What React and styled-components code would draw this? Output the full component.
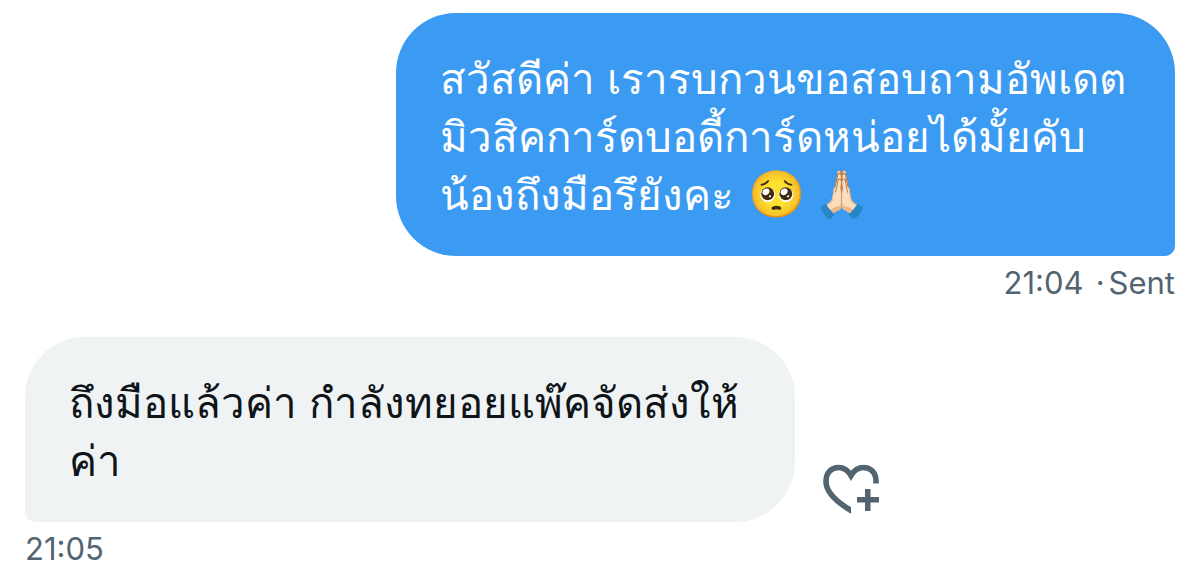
import React from "react";
import styled, { createGlobalStyle } from "styled-components";

const GlobalStyle = createGlobalStyle`
  *, *::before, *::after { box-sizing: border-box; }
  body {
    margin: 0;
    background: #ffffff;
    font-family: "Liberation Sans", sans-serif;
  }
`;

const Conversation = styled.main`
  display: flex;
  flex-direction: column;
  gap: 36px;
  padding: 13px 25px;
`;

const Message = styled.article`
  display: flex;
  flex-direction: column;
  align-items: ${({ $sent }) => ($sent ? "flex-end" : "flex-start")};
`;

const BubbleRow = styled.div`
  display: flex;
  align-items: flex-end;
  justify-content: ${({ $sent }) => ($sent ? "flex-end" : "flex-start")};
  gap: 28px;
  width: 100%;
`;

const Bubble = styled.p`
  margin: 0;
  max-width: ${({ $sent }) => ($sent ? "min(779px, 90%)" : "min(770px, 90%)")};
  padding: 38px 44px 31px;
  border-radius: ${({ $sent }) => ($sent ? "60px 60px 10px 60px" : "60px 60px 60px 10px")};
  background: ${({ $sent }) => ($sent ? "#3b9af2" : "#eff3f4")};
  color: ${({ $sent }) => ($sent ? "#ffffff" : "#0f1419")};
  font-size: 42px;
  line-height: 58px;
`;

const Emoji = styled.span`
  margin: 0 6px 0 2px;
  font-size: 46px;
  line-height: 44px;
`;

const Meta = styled.footer`
  display: flex;
  align-items: center;
  gap: 12px;
  padding-top: 9px;
  color: #536471;
  font-family: Inter, sans-serif;
  font-size: 31px;
  line-height: 36px;
`;

const Status = styled.span`
  display: flex;
  gap: 4px;
`;

const ReactButton = styled.button`
  display: flex;
  margin: 0;
  padding: 0 0 7px;
  border: 0;
  background: none;
  color: #536471;
  cursor: pointer;
`;

const HeartPlus = () => (
  <svg width="57" height="51" viewBox="0 0 57 51" fill="none" aria-hidden="true">
    <clipPath id="heart-cut">
      <path d="M0 0H57V20H28V51H0Z" />
    </clipPath>
    <path
      clipPath="url(#heart-cut)"
      d="M33 49.5L28 46.5C12 37 3 28 3 17.5C3 8.5 8.5 3.5 15.5 3.5C20.5 3.5 25 6.5 28 11.5C31 6.5 35.5 3.5 40.5 3.5C47.5 3.5 53 8.5 53 17V19.5"
      stroke="currentColor"
      strokeWidth="5.6"
    />
    <path d="M42 25H47.5V33H56V38.5H47.5V47H42V38.5H34V33H42Z" fill="currentColor" />
  </svg>
);

export default function App() {
  return (
    <>
      <GlobalStyle />
      <Conversation lang="th">
        <Message $sent>
          <BubbleRow $sent>
            <Bubble $sent>
              สวัสดีค่า เรารบกวนขอสอบถามอัพเดตมิวสิคการ์ดบอดี้การ์ดหน่อยได้มั้ยคับ น้องถึงมือรึยังคะ{" "}
              <Emoji>🥺</Emoji>
              <Emoji>🙏🏻</Emoji>
            </Bubble>
          </BubbleRow>
          <Meta>
            <time dateTime="21:04">21:04</time>
            <Status>
              <span>·</span>
              <span>Sent</span>
            </Status>
          </Meta>
        </Message>
        <Message>
          <BubbleRow>
            <Bubble>ถึงมือแล้วค่า กำลังทยอยแพ๊คจัดส่งให้ค่า</Bubble>
            <ReactButton type="button" aria-label="Add reaction">
              <HeartPlus />
            </ReactButton>
          </BubbleRow>
          <Meta>
            <time dateTime="21:05">21:05</time>
          </Meta>
        </Message>
      </Conversation>
    </>
  );
}
